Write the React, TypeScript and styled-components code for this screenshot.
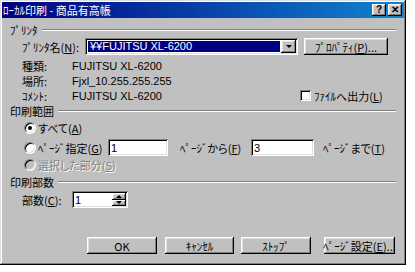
import styled, { createGlobalStyle } from "styled-components";

const GlobalStyle = createGlobalStyle`
  body {
    margin: 0;
    background: #ffffff;
    font-family: "Noto Sans CJK JP", "Liberation Sans", sans-serif;
    font-size: 11px;
    font-feature-settings: "palt";
    color: #000000;
  }
`;

const raised = `
  box-shadow: inset -1px -1px #000000, inset 1px 1px #ffffff,
    inset -2px -2px #808080, inset 2px 2px #dfdfdf;
`;

const sunken = `
  box-shadow: inset 1px 1px #808080, inset -1px -1px #ffffff,
    inset 2px 2px #000000, inset -2px -2px #dfdfdf;
`;

const Window = styled.div`
  width: 406px;
  height: 265px;
  box-sizing: border-box;
  padding: 2px;
  background: #c0c0c0;
  box-shadow: inset -1px -1px #000000, inset 1px 1px #dfdfdf,
    inset -2px -2px #808080, inset 2px 2px #ffffff;
  display: flex;
  flex-direction: column;
`;

const TitleBar = styled.div`
  height: 16px;
  background: linear-gradient(to right, #000080, #1084d0);
  color: #ffffff;
  display: flex;
  align-items: center;
  justify-content: space-between;
  padding: 0 2px 0 1px;
  line-height: 16px;
`;

const TitleButtons = styled.div`
  display: flex;
  gap: 2px;
`;

const TitleButton = styled.div`
  width: 14px;
  height: 12px;
  background: #c0c0c0;
  ${raised}
  color: #000000;
  font-family: "Liberation Sans", sans-serif;
  font-weight: bold;
  font-size: 10px;
  line-height: 12px;
  text-align: center;
`;

const Body = styled.div`
  flex: 1;
  display: flex;
  flex-direction: column;
  padding: 6px 8px 9px 8px;
`;

const GroupHeader = styled.div<{ $top: number }>`
  display: flex;
  align-items: center;
  gap: 4px;
  height: 12px;
  margin-top: ${(p) => p.$top}px;
  line-height: 12px;
`;

const GroupLine = styled.div`
  flex: 1;
  border-top: 1px solid #808080;
  border-bottom: 1px solid #ffffff;
`;

const Row = styled.div<{ $top: number; $h: number; $indent: number }>`
  display: flex;
  align-items: center;
  height: ${(p) => p.$h}px;
  margin-top: ${(p) => p.$top}px;
  padding-left: ${(p) => p.$indent}px;
`;

const Label = styled.span<{ $w?: number; $pad?: number; $disabled?: boolean }>`
  display: inline-block;
  width: ${(p) => (p.$w ? `${p.$w}px` : "auto")};
  padding-left: ${(p) => p.$pad ?? 0}px;
  flex-shrink: 0;
  white-space: nowrap;
  color: ${(p) => (p.$disabled ? "#808080" : "#000000")};
  text-shadow: ${(p) => (p.$disabled ? "1px 1px #ffffff" : "none")};
`;

const Value = styled.span`
  white-space: nowrap;
  font-family: "Liberation Sans", "Noto Sans CJK JP", sans-serif;
`;

const Combo = styled.div`
  width: 213px;
  height: 17px;
  box-sizing: border-box;
  background: #ffffff;
  ${sunken}
  padding: 2px;
  display: flex;
  flex-shrink: 0;
`;

const ComboText = styled.div`
  flex: 1;
  margin: 1px;
  background: #000080;
  color: #ffffff;
  font-family: "Liberation Sans", "Noto Sans CJK JP", sans-serif;
  font-size: 11px;
  line-height: 11px;
  padding-left: 2px;
`;

const DropButton = styled.div`
  width: 15px;
  background: #c0c0c0;
  ${raised}
  display: flex;
  align-items: center;
  justify-content: center;
`;

const Arrow = styled.div<{ $up?: boolean }>`
  width: 0;
  height: 0;
  border-left: 3px solid transparent;
  border-right: 3px solid transparent;
  ${(p) =>
    p.$up ? "border-bottom: 3px solid #000000;" : "border-top: 3px solid #000000;"}
`;

const Button = styled.div<{ $w: number; $left?: number }>`
  width: ${(p) => p.$w}px;
  height: 17px;
  margin-left: ${(p) => p.$left ?? 0}px;
  box-sizing: border-box;
  flex-shrink: 0;
  background: #c0c0c0;
  ${raised}
  display: flex;
  align-items: center;
  justify-content: center;
  white-space: nowrap;
  line-height: 12px;
`;

const Spacer = styled.div`
  flex: 1;
`;

const CheckBox = styled.div`
  width: 11px;
  height: 11px;
  margin-right: 3px;
  flex-shrink: 0;
  background: #ffffff;
  ${sunken}
`;

const Radio = styled.div<{ $checked?: boolean; $disabled?: boolean }>`
  width: 12px;
  height: 12px;
  margin-left: 2px;
  margin-right: 2px;
  flex-shrink: 0;
  box-sizing: border-box;
  border-radius: 50%;
  background: ${(p) => (p.$disabled ? "#c0c0c0" : "#ffffff")};
  border: 1px solid;
  border-color: #808080 #ffffff #ffffff #808080;
  box-shadow: inset 1px 1px #000000, inset -1px -1px #dfdfdf;
  display: flex;
  align-items: center;
  justify-content: center;

  &::after {
    content: "";
    display: ${(p) => (p.$checked ? "block" : "none")};
    width: 4px;
    height: 4px;
    border-radius: 50%;
    background: #000000;
  }
`;

const Field = styled.div<{ $w: number }>`
  width: ${(p) => p.$w}px;
  height: 17px;
  box-sizing: border-box;
  background: #ffffff;
  ${sunken}
  padding: 2px 3px;
  display: flex;
  align-items: center;
  font-family: "Liberation Sans", sans-serif;
  font-size: 11px;
  flex-shrink: 0;
`;

const SpinBox = styled(Field)`
  padding-right: 2px;
`;

const SpinText = styled.div`
  flex: 1;
`;

const SpinButtons = styled.div`
  width: 14px;
  height: 13px;
  display: flex;
  flex-direction: column;
`;

const SpinButton = styled.div`
  flex: 1;
  background: #c0c0c0;
  ${raised}
  display: flex;
  align-items: center;
  justify-content: center;
`;

const ButtonRow = styled.div`
  margin-top: auto;
  display: flex;
  justify-content: flex-end;
  padding-right: 1px;
`;

export default function App() {
  return (
    <>
      <GlobalStyle />
      <Window>
        <TitleBar>
          <span>ﾛｰｶﾙ印刷 - 商品有高帳</span>
          <TitleButtons>
            <TitleButton>?</TitleButton>
            <TitleButton>✕</TitleButton>
          </TitleButtons>
        </TitleBar>
        <Body>
          <GroupHeader $top={0}>
            <span>ﾌﾟﾘﾝﾀ</span>
            <GroupLine />
          </GroupHeader>
          <Row $top={2} $h={17} $indent={12}>
            <Label $w={63}>
              ﾌﾟﾘﾝﾀ名(<u>N</u>):
            </Label>
            <Combo>
              <ComboText>¥¥FUJITSU XL-6200</ComboText>
              <DropButton>
                <Arrow />
              </DropButton>
            </Combo>
            <Button $w={84} $left={6}>
              ﾌﾟﾛﾊﾟﾃｨ(<u>P</u>)...
            </Button>
          </Row>
          <Row $top={3} $h={15} $indent={12}>
            <Label $w={50}>種類:</Label>
            <Value>FUJITSU XL-6200</Value>
          </Row>
          <Row $top={0} $h={15} $indent={12}>
            <Label $w={50}>場所:</Label>
            <Value>Fjxl_10.255.255.255</Value>
          </Row>
          <Row $top={0} $h={15} $indent={12}>
            <Label $w={50}>ｺﾒﾝﾄ:</Label>
            <Value>FUJITSU XL-6200</Value>
            <Spacer />
            <CheckBox />
            <Label $w={82}>
              ﾌｧｲﾙへ出力(<u>L</u>)
            </Label>
          </Row>
          <GroupHeader $top={2}>
            <span>印刷範囲</span>
            <GroupLine />
          </GroupHeader>
          <Row $top={3} $h={15} $indent={12}>
            <Radio $checked />
            <Label>
              すべて(<u>A</u>)
            </Label>
          </Row>
          <Row $top={4} $h={17} $indent={12}>
            <Radio />
            <Label $w={70}>
              ﾍﾟｰｼﾞ指定(<u>G</u>)
            </Label>
            <Field $w={60}>1</Field>
            <Label $w={71} $pad={12}>
              ﾍﾟｰｼﾞから(<u>F</u>)
            </Label>
            <Field $w={63}>3</Field>
            <Label $pad={9}>
              ﾍﾟｰｼﾞまで(<u>T</u>)
            </Label>
          </Row>
          <Row $top={1} $h={15} $indent={12}>
            <Radio $disabled />
            <Label $disabled>
              選択した部分(<u>S</u>)
            </Label>
          </Row>
          <GroupHeader $top={4}>
            <span>印刷部数</span>
            <GroupLine />
          </GroupHeader>
          <Row $top={3} $h={17} $indent={12}>
            <Label $w={50}>
              部数(<u>C</u>):
            </Label>
            <SpinBox $w={56}>
              <SpinText>1</SpinText>
              <SpinButtons>
                <SpinButton>
                  <Arrow $up />
                </SpinButton>
                <SpinButton>
                  <Arrow />
                </SpinButton>
              </SpinButtons>
            </SpinBox>
          </Row>
          <ButtonRow>
            <Button $w={70}>OK</Button>
            <Button $w={69} $left={8}>
              ｷｬﾝｾﾙ
            </Button>
            <Button $w={70} $left={7}>
              ｽﾄｯﾌﾟ
            </Button>
            <Button $w={71} $left={13}>
              ﾍﾟｰｼﾞ設定(<u>E</u>)...
            </Button>
          </ButtonRow>
        </Body>
      </Window>
    </>
  );
}
